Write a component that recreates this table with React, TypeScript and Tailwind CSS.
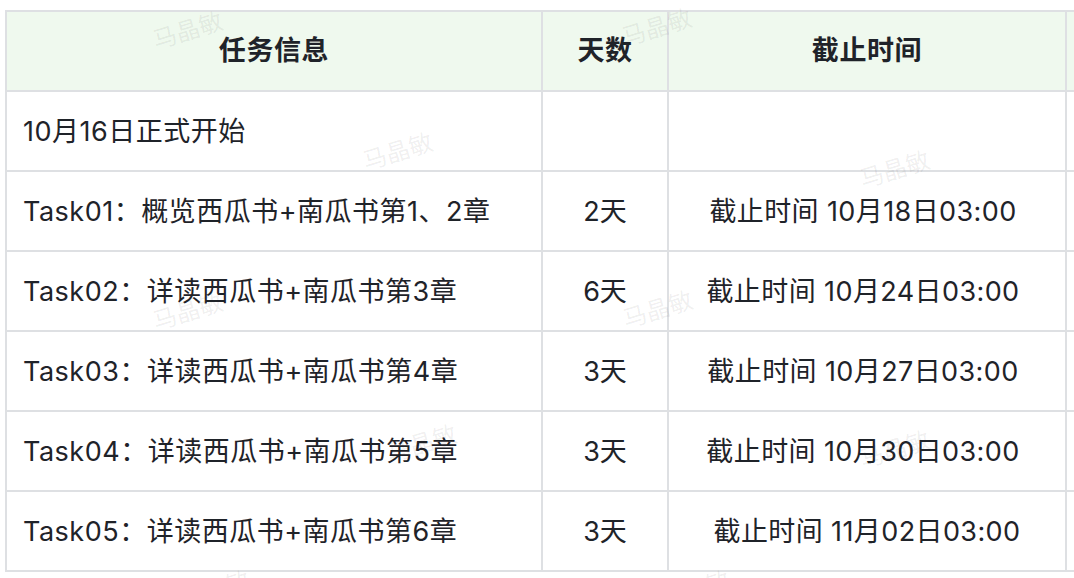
import React from "react";

const rows = [
  { info: "10月16日正式开始", days: "", deadline: "" },
  { info: "Task01：概览西瓜书+南瓜书第1、2章", days: "2天", deadline: "截止时间 10月18日03:00" },
  { info: "Task02：详读西瓜书+南瓜书第3章", days: "6天", deadline: "截止时间 10月24日03:00" },
  { info: "Task03：详读西瓜书+南瓜书第4章", days: "3天", deadline: "截止时间 10月27日03:00" },
  { info: "Task04：详读西瓜书+南瓜书第5章", days: "3天", deadline: "截止时间 10月30日03:00" },
  { info: "Task05：详读西瓜书+南瓜书第6章", days: "3天", deadline: "\u00a0截止时间 11月02日03:00" },
];

// watermark spots, centre points
const marks = [
  { x: 188, y: 31 },
  { x: 657, y: 28 },
  { x: 398, y: 152 },
  { x: 895, y: 170 },
  { x: 188, y: 312 },
  { x: 658, y: 310 },
  { x: 422, y: 444 },
  { x: 895, y: 450 },
  { x: 215, y: 590 },
  { x: 695, y: 590 },
];

export default function App() {
  return (
    <div
      className="relative h-[578px] w-[1074px] overflow-hidden bg-white pl-[5px] pt-[10px] text-[#1f2329]"
      style={{ fontFamily: 'Inter, "Noto Sans CJK SC", sans-serif' }}
    >
      <div className="grid w-[1200px] grid-cols-[536px_126px_398px_140px] border-l-2 border-t-2 border-[#dee0e3]">
        {/* Header */}
        <div className="flex h-[80px] items-center justify-center border-b-2 border-r-2 border-[#dee0e3] bg-[#eff9ee] text-[27px] font-semibold tracking-[0.6px]">
          任务信息
        </div>
        <div className="flex h-[80px] items-center justify-center border-b-2 border-r-2 border-[#dee0e3] bg-[#eff9ee] text-[27px] font-semibold tracking-[0.6px]">
          天数
        </div>
        <div className="flex h-[80px] items-center justify-center border-b-2 border-r-2 border-[#dee0e3] bg-[#eff9ee] text-[27px] font-semibold tracking-[0.6px]">
          截止时间
        </div>
        <div className="h-[80px] border-b-2 border-r-2 border-[#dee0e3] bg-[#eff9ee]" />

        {/* Body */}
        {rows.map((r, i) => (
          <React.Fragment key={i}>
            <div className="flex h-[80px] items-center border-b-2 border-r-2 border-[#dee0e3] pl-[16px] pt-[2px] text-[27px] tracking-[0.5px]">
              {r.info}
            </div>
            <div className="flex h-[80px] items-center justify-center border-b-2 border-r-2 border-[#dee0e3] pt-[2px] text-[27px]">
              {r.days}
            </div>
            <div className="flex h-[80px] items-center justify-center whitespace-pre border-b-2 border-r-2 border-[#dee0e3] pr-[8px] pt-[2px] text-[27px] tracking-[0.4px]">
              {r.deadline}
            </div>
            <div className="h-[80px] border-b-2 border-r-2 border-[#dee0e3]" />
          </React.Fragment>
        ))}
      </div>

      {/* Watermark */}
      <div className="pointer-events-none absolute inset-0">
        {marks.map((m, i) => (
          <span
            key={i}
            className="absolute -translate-x-1/2 -translate-y-1/2 -rotate-[17deg] text-[24px] text-[#1f2329]/[0.08]"
            style={{ left: m.x, top: m.y }}
          >
            马晶敏
          </span>
        ))}
      </div>
    </div>
  );
}
